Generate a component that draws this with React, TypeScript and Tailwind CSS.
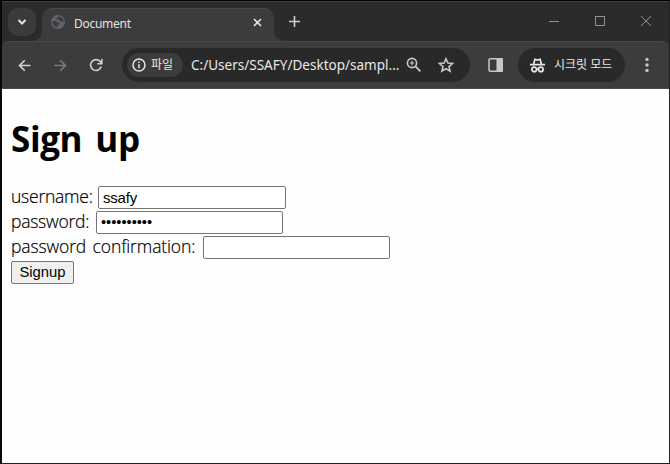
import React from "react";

const UI = "font-['Noto_Sans','Noto_Sans_CJK_KR',sans-serif]";

function TabStrip() {
  return (
    <div className="flex h-10 items-start bg-[#2b2b2b] pl-[6px] border-t border-[#3e3e3e]">
      <button className="mt-[6px] flex h-7 w-7 items-center justify-center rounded-[10px] bg-[#3b3b3b]">
        <svg width="28" height="28" fill="none" stroke="#e4e4e4" strokeWidth="2"><path d="M10.5 12l3.5 3.5 3.5-3.5" /></svg>
      </button>
      <div className="relative ml-[6px] mt-[6px] flex h-[33px] w-[232px] items-start rounded-t-[10px] border-t border-[#484848] bg-[#3c3c3c]">
        <svg className="absolute -left-[10px] bottom-0" width="10" height="10"><path d="M10 0v10H0A10 10 0 0 0 10 0Z" fill="#3c3c3c" /></svg>
        <svg className="absolute -right-[10px] bottom-0" width="10" height="10"><path d="M0 0v10h10A10 10 0 0 1 0 0Z" fill="#3c3c3c" /></svg>
        <svg className="ml-[9px] mt-[6px]" width="14" height="14" viewBox="0 0 14 14">
          <circle cx="7" cy="7" r="7" fill="#5f6368" />
          <path d="M1.3 6h3.5l2 1.8h1.5v1.7H6.5v2.7C3.5 12 1.3 9.5 1.3 6ZM7 1.5c0 2-1.8 1.5-1.8 3.2h3l1.6 1.7 2.8.2C12.7 4 10.5 1.5 7 1.5Z" fill="#3c3c3c" />
        </svg>
        <span className="ml-[9px] mt-[7px] w-[58px] text-[12px] leading-4 tracking-[-0.28px] text-[#e3e3e3]">Document</span>
        <svg className="ml-[121px] mt-[9px]" width="9" height="9" stroke="#e4e4e4" strokeWidth="1.7"><path d="M1 1l7 7M8 1l-7 7" /></svg>
      </div>
      <svg className="ml-[15px] mt-[14px]" width="11" height="11" stroke="#cfcfcf" strokeWidth="1.6"><path d="M0 5.5h11M5.5 0v11" /></svg>
      <svg className="ml-auto mr-[16px] mt-[13px]" width="104" height="14" fill="none" stroke="#929292">
        <path d="M0 6.5h10M46.5 1.5h9v9h-9zM92 1l10 10M102 1l-10 10" />
      </svg>
    </div>
  );
}

function Toolbar() {
  return (
    <div className="h-[48px] bg-[#2b2b2b]">
      <div className="flex h-full items-center rounded-t-[7px] border-b border-t border-b-[#494949] border-t-[#484848] bg-[#3c3c3c] pl-[16px]">
        <svg width="13" height="13" fill="none" stroke="#d1d1d1" strokeWidth="1.6"><path d="M12.5 6.5H1.5M6.8 1.2L1.5 6.5l5.3 5.3" /></svg>
        <svg className="ml-[23px]" width="13" height="13" fill="none" stroke="#7b7b7b" strokeWidth="1.6"><path d="M.5 6.5h11M6.2 1.2l5.3 5.3-5.3 5.3" /></svg>
        <svg className="ml-[22px]" width="14" height="14" fill="none" stroke="#d1d1d1" strokeWidth="1.6"><path d="M12.2 8.6A5.4 5.4 0 1 1 11 3.4l1.5 1.6M12.8 1v4.7H8.3" /></svg>
        <div className="ml-[19px] flex h-[34px] w-[348px] items-center rounded-full bg-[#292929] pl-[5px]">
          <div className="flex h-6 w-[56px] items-center rounded-full bg-[#3c3c3c] pl-[5px]">
            <svg width="14" height="14" fill="none" stroke="#e5e5e5" strokeWidth="1.5"><circle cx="7" cy="7" r="6" /><path d="M7 6.2v4M7 3.5v1.5" /></svg>
            <span className="ml-[5px] whitespace-nowrap text-[12px] leading-4 text-[#e8e8e8]">파일</span>
          </div>
          <span className="ml-[8px] w-[208px] whitespace-nowrap text-[13.5px] leading-5 tracking-[0.01px] text-[#e8e8e8]">C:/Users/SSAFY/Desktop/sampl...</span>
          <svg className="ml-[7px]" width="16" height="16" fill="none" stroke="#c8c8c8" strokeWidth="1.6"><circle cx="6" cy="6" r="4.6" /><path d="M9.4 9.4l5 5" strokeWidth="1.9" /><path d="M6 3.8v4.4M3.8 6h4.4" strokeWidth="1.2" /></svg>
          <svg className="ml-[16px]" width="16" height="16" fill="none" stroke="#c8c8c8" strokeWidth="1.6"><path d="M8 1.7l1.9 4.4 4.7.4-3.6 3.1 1.1 4.6L8 11.8l-4.1 2.4L5 9.6 1.4 6.5l4.7-.4Z" /></svg>
        </div>
        <svg className="ml-[18px]" width="16" height="14" fill="none" stroke="#c8c8c8" strokeWidth="1.5"><rect x="1" y=".75" width="13.2" height="12.5" rx="1.3" /><path d="M9.2 1h5v12h-5z" fill="#c8c8c8" /></svg>
        <div className="ml-[14px] flex h-[34px] w-[107px] items-center rounded-full bg-[#292929] pl-[12px]">
          <svg width="15" height="15" viewBox="0 0 15 15" fill="none" stroke="#e8e8e8" strokeWidth="1.7">
            <path d="M0 6.7h15M3.5 6.4L4.9 1.3l2.6.8 2.6-.8 1.4 5.1" /><circle cx="4.2" cy="11.4" r="2.3" /><circle cx="10.8" cy="11.4" r="2.3" /><path d="M6.3 10.9q1.2-.7 2.4 0" />
          </svg>
          <span className="ml-[9px] whitespace-nowrap text-[12px] leading-4 text-[#e8e8e8]">시크릿 모드</span>
        </div>
        <svg className="ml-[20px]" width="4" height="16" fill="#c8c8c8"><circle cx="2" cy="2.4" r="1.7" /><circle cx="2" cy="8" r="1.7" /><circle cx="2" cy="13.4" r="1.7" /></svg>
      </div>
    </div>
  );
}

const field = "h-[23px] rounded-[2px] border border-[#767676] bg-white px-[4px] pb-px font-['Liberation_Sans',sans-serif] leading-5 text-black outline-none";
const label = "whitespace-nowrap font-['Open_Sans','Noto_Sans',sans-serif] font-light leading-[25px] text-black pb-[2px] [-webkit-text-stroke:0.2px_black]";

export default function App() {
  return (
    <div className={`${UI} flex h-[464px] w-[670px] flex-col overflow-hidden border-b border-l-2 border-r border-t border-b-[#222] border-l-[#080808] border-r-[#222] border-t-black bg-[#fefefe]`}>
      <TabStrip />
      <Toolbar />
      <main className="flex flex-col items-start pl-[9px] pt-[25px]">
        <h1 className="whitespace-nowrap font-['Open_Sans','Noto_Sans',sans-serif] text-[35px] font-bold leading-[50px] tracking-[-0.4px] [word-spacing:4.5px] text-black">Sign up</h1>
        <form className="mt-[21px]" onSubmit={(e) => e.preventDefault()}>
          <div className="flex h-[25px] items-center">
            <label htmlFor="u" className={`${label} w-[87px] text-[17.5px] tracking-[-0.24px]`}>username:</label>
            <input id="u" className={`${field} w-[188px] text-[15px] tracking-[-0.2px]`} defaultValue="ssafy" />
          </div>
          <div className="flex h-[25px] items-center">
            <label htmlFor="p" className={`${label} w-[85px] text-[17.5px] tracking-[-0.24px]`}>password:</label>
            <input id="p" type="password" className={`${field} w-[187px] text-[14.6px]`} defaultValue="signup2024" />
          </div>
          <div className="flex h-[25px] items-center">
            <label htmlFor="c" className={`${label} w-[192px] text-[17.5px] tracking-[-0.12px] [word-spacing:2px]`}>password confirmation:</label>
            <input id="c" type="password" className={`${field} w-[187px] text-[14.6px]`} />
          </div>
          <button className="mt-px flex h-[23px] w-[63px] items-center justify-center rounded-[2px] border border-[#767676] bg-[#efefef] pb-px font-['Liberation_Sans',sans-serif] text-[14.8px] leading-5 text-black">Signup</button>
        </form>
      </main>
    </div>
  );
}
